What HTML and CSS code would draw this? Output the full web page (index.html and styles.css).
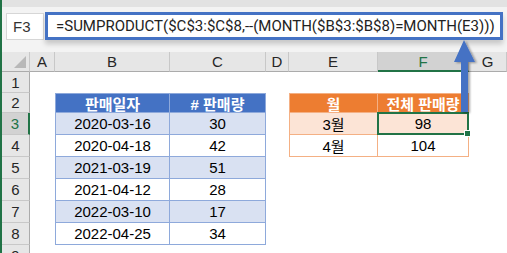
FILE: index.html
```html
<!DOCTYPE html>
<html lang="ko">
<head>
<meta charset="utf-8">
<link rel="stylesheet" href="styles.css">
</head>
<body>
<div class="app">
  <div class="topband"></div>
  <div class="fbar">
    <div class="namebox">F3</div>
    <div class="formula">=SUMPRODUCT($C$3:$C$8,--(MONTH($B$3:$B$8)=MONTH(E3)))</div>
  </div>
  <div class="sheet">
    <div class="ch corner"></div><div class="ch">A</div><div class="ch">B</div><div class="ch">C</div><div class="ch">D</div><div class="ch">E</div><div class="ch sel">F</div><div class="ch">G</div>

    <div class="rh">1</div><div class="c"></div><div class="c"></div><div class="c"></div><div class="c"></div><div class="c"></div><div class="c"></div><div class="c"></div>

    <div class="rh">2</div><div class="c"></div>
    <div class="c bt bl btop bh">판매일자</div><div class="c bt btop bh"># 판매량</div>
    <div class="c"></div>
    <div class="c ot ol otop oh">월</div><div class="c ot otop oh">전체 판매량</div>
    <div class="c"></div>

    <div class="rh sel">3</div><div class="c"></div>
    <div class="c bt bl bf">2020-03-16</div><div class="c bt bf">30</div>
    <div class="c"></div>
    <div class="c ot ol of">3월</div><div class="c ot of active">98</div>
    <div class="c"></div>

    <div class="rh">4</div><div class="c"></div>
    <div class="c bt bl">2020-04-18</div><div class="c bt">42</div>
    <div class="c"></div>
    <div class="c ot ol">4월</div><div class="c ot">104</div>
    <div class="c"></div>

    <div class="rh">5</div><div class="c"></div>
    <div class="c bt bl bf">2021-03-19</div><div class="c bt bf">51</div>
    <div class="c"></div><div class="c"></div><div class="c"></div><div class="c"></div>

    <div class="rh">6</div><div class="c"></div>
    <div class="c bt bl">2021-04-12</div><div class="c bt">28</div>
    <div class="c"></div><div class="c"></div><div class="c"></div><div class="c"></div>

    <div class="rh">7</div><div class="c"></div>
    <div class="c bt bl bf">2022-03-10</div><div class="c bt bf">17</div>
    <div class="c"></div><div class="c"></div><div class="c"></div><div class="c"></div>

    <div class="rh">8</div><div class="c"></div>
    <div class="c bt bl">2022-04-25</div><div class="c bt">34</div>
    <div class="c"></div><div class="c"></div><div class="c"></div><div class="c"></div>

    <div class="rh">9</div><div class="c"></div><div class="c"></div><div class="c"></div><div class="c"></div><div class="c"></div><div class="c"></div><div class="c"></div>
  </div>
</div>
<svg class="arrow" width="507" height="253" viewBox="0 0 507 253">
  <defs>
    <filter id="sh" x="-50%" y="-10%" width="200%" height="130%">
      <feDropShadow dx="2" dy="1" stdDeviation="1.2" flood-color="#000" flood-opacity="0.35"/>
    </filter>
  </defs>
  <polygon filter="url(#sh)" fill="#4472C4" points="464,40 475,62 468,62 468,112 461,112 461,62 454,62"/>
</svg>
</body>
</html>
```
FILE: styles.css
```css
body {
  margin: 0;
  width: 507px;
  height: 253px;
  overflow: hidden;
  position: relative;
  background: #fff;
  font-family: "Liberation Sans", "Noto Sans CJK KR", sans-serif;
}

.app {
  height: 253px;
  border-left: 2px solid #217346;
  box-sizing: border-box;
}

.topband {
  height: 7px;
  background: #e2e2e2;
}

.fbar {
  height: 45px;
  background: #f3f3f3;
  display: flex;
  align-items: flex-start;
  padding-top: 5px;
  box-sizing: border-box;
}

.namebox {
  margin-left: 4px;
  margin-top: 1px;
  width: 38px;
  height: 27px;
  box-sizing: border-box;
  background: #fff;
  border: 1px solid #d6d6d6;
  padding-left: 6px;
  font-size: 15px;
  line-height: 25px;
  color: #333;
}

.formula {
  margin-left: 1px;
  width: 458px;
  height: 28px;
  box-sizing: border-box;
  border: 3px solid #4472C4;
  background: #fff;
  padding-left: 8px;
  font-family: Roboto, "Liberation Sans", sans-serif;
  font-size: 15px;
  line-height: 22px;
  color: #222;
  white-space: nowrap;
  overflow: hidden;
  box-shadow: 0 4px 5px rgba(0, 0, 0, 0.18);
}

.sheet {
  display: grid;
  grid-template-columns: 28px 25px 115px 96px 23px 89px 91px 1fr;
  grid-template-rows: 20px 21px 20px repeat(7, 22px);
  background: #fff;
}

.ch,
.rh {
  display: flex;
  align-items: center;
  justify-content: center;
  background: #e6e6e6;
  color: #262626;
  font-size: 15px;
  box-sizing: border-box;
}

.ch {
  border-right: 1px solid #c8c8c8;
  border-bottom: 1px solid #ababab;
}

.rh {
  border-right: 1px solid #ababab;
  border-bottom: 1px solid #c8c8c8;
}

.ch.sel {
  background: #d2d2d2;
  color: #217346;
  border-bottom: 2px solid #217346;
}

.rh.sel {
  background: #d2d2d2;
  color: #217346;
  border-right: 2px solid #217346;
}

.corner {
  position: relative;
}

.corner::after {
  content: "";
  position: absolute;
  right: 3px;
  bottom: 3px;
  width: 12px;
  height: 12px;
  background: #b8b8b8;
  clip-path: polygon(100% 0, 100% 100%, 0 100%);
}

.c {
  display: flex;
  align-items: center;
  justify-content: center;
  font-size: 15px;
  color: #000;
  box-sizing: border-box;
  white-space: nowrap;
}

/* blue table */
.bt {
  border-right: 1px solid #8EA9DB;
  border-bottom: 1px solid #8EA9DB;
}
.bl { border-left: 1px solid #8EA9DB; }
.btop { border-top: 1px solid #8EA9DB; }
.bh {
  background: #4472C4;
  color: #fff;
  font-weight: bold;
}
.bf { background: #D9E1F2; }

/* orange table */
.ot {
  border-right: 1px solid #F4B084;
  border-bottom: 1px solid #F4B084;
}
.ol { border-left: 1px solid #F4B084; }
.otop { border-top: 1px solid #F4B084; }
.oh {
  background: #ED7D31;
  color: #fff;
  font-weight: bold;
}
.of { background: #FCE4D6; }

.active {
  position: relative;
}
.active::before {
  content: "";
  position: absolute;
  left: -1px;
  top: -1px;
  right: -1px;
  bottom: -1px;
  border: 2px solid #217346;
}
.active::after {
  content: "";
  position: absolute;
  right: -3px;
  bottom: -3px;
  width: 5px;
  height: 5px;
  background: #217346;
  border: 1px solid #fff;
}

.arrow {
  position: absolute;
  left: 0;
  top: 0;
  pointer-events: none;
}
```
